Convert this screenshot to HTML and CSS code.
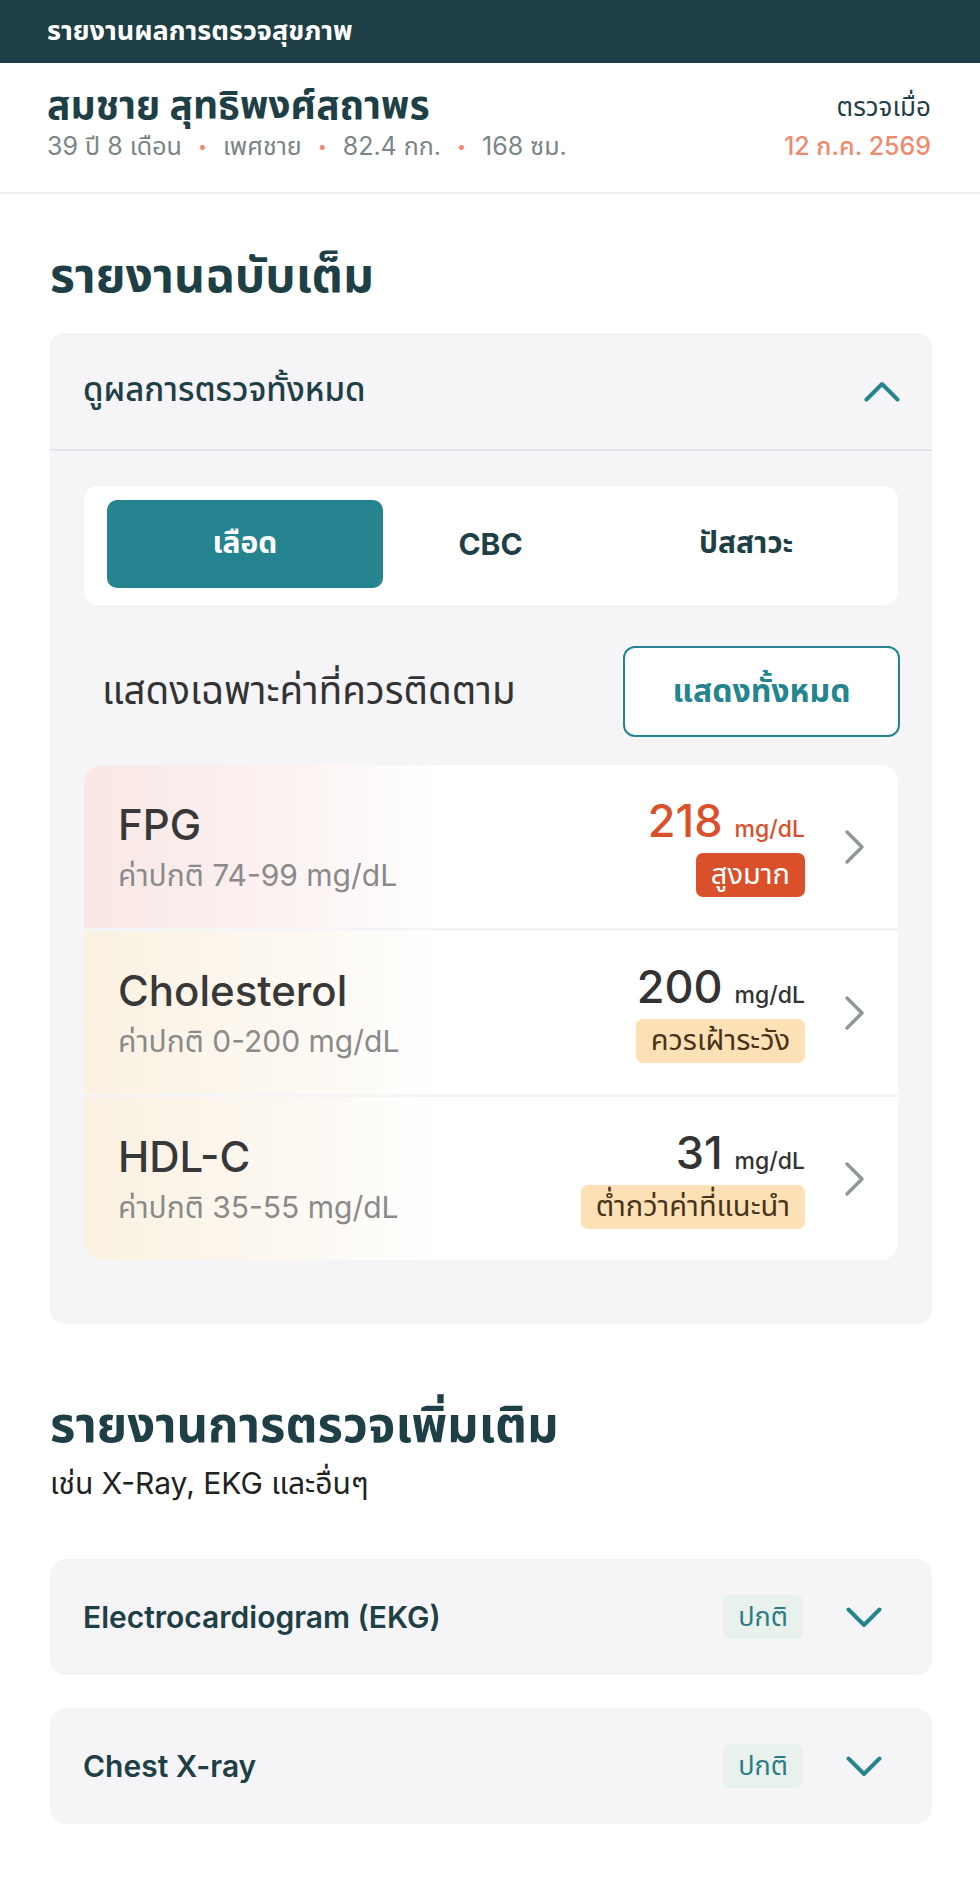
FILE: index.html
```html
<!DOCTYPE html>
<html lang="th">
<head>
    <meta charset="UTF-8">
    <meta name="viewport" content="width=device-width, initial-scale=1.0">
    <title>รายงานผลการตรวจสุขภาพ</title>
    <link rel="stylesheet" href="styles.css">
</head>
<body>
    <header class="topbar">รายงานผลการตรวจสุขภาพ</header>

    <section class="patient">
        <div class="patient-info">
            <h1 class="patient-name">สมชาย สุทธิพงศ์สถาพร</h1>
            <p class="patient-meta">
                39 ปี 8 เดือน <span class="dot">•</span> เพศชาย <span class="dot">•</span> 82.4 กก. <span class="dot">•</span> 168 ซม.
            </p>
        </div>
        <div class="checkup">
            <span class="checkup-label">ตรวจเมื่อ</span>
            <span class="checkup-date">12 ก.ค. 2569</span>
        </div>
    </section>

    <main class="content">
        <h2 class="section-title">รายงานฉบับเต็ม</h2>

        <div class="panel">
            <div class="panel-head">
                <span>ดูผลการตรวจทั้งหมด</span>
                <svg class="chevron-up" width="36" height="21" viewBox="0 0 36 21"><path d="M2.5 18.5 L18 3 L33.5 18.5" /></svg>
            </div>
            <div class="panel-body">
                <div class="tabs">
                    <button class="tab active">เลือด</button>
                    <button class="tab">CBC</button>
                    <button class="tab">ปัสสาวะ</button>
                </div>

                <div class="filter-row">
                    <span>แสดงเฉพาะค่าที่ควรติดตาม</span>
                    <button class="btn-outline">แสดงทั้งหมด</button>
                </div>

                <div class="results">
                    <div class="result-row high">
                        <div class="result-name">
                            <h3>FPG</h3>
                            <p>ค่าปกติ 74-99 mg/dL</p>
                        </div>
                        <div class="result-value">
                            <div class="value"><strong>218</strong><small>mg/dL</small></div>
                            <span class="badge badge-high">สูงมาก</span>
                        </div>
                        <svg class="chevron-right" width="22" height="36" viewBox="0 0 22 36"><path d="M3 3 L18 18 L3 33" /></svg>
                    </div>
                    <div class="result-row warn">
                        <div class="result-name">
                            <h3>Cholesterol</h3>
                            <p>ค่าปกติ 0-200 mg/dL</p>
                        </div>
                        <div class="result-value">
                            <div class="value"><strong>200</strong><small>mg/dL</small></div>
                            <span class="badge badge-warn">ควรเฝ้าระวัง</span>
                        </div>
                        <svg class="chevron-right" width="22" height="36" viewBox="0 0 22 36"><path d="M3 3 L18 18 L3 33" /></svg>
                    </div>
                    <div class="result-row warn">
                        <div class="result-name">
                            <h3>HDL-C</h3>
                            <p>ค่าปกติ 35-55 mg/dL</p>
                        </div>
                        <div class="result-value">
                            <div class="value"><strong>31</strong><small>mg/dL</small></div>
                            <span class="badge badge-warn">ต่ำกว่าค่าที่แนะนำ</span>
                        </div>
                        <svg class="chevron-right" width="22" height="36" viewBox="0 0 22 36"><path d="M3 3 L18 18 L3 33" /></svg>
                    </div>
                </div>
            </div>
        </div>

        <h2 class="section-title extra-title">รายงานการตรวจเพิ่มเติม</h2>
        <p class="section-sub">เช่น X-Ray, EKG และอื่นๆ</p>

        <div class="extra-list">
            <div class="extra-card">
                <span class="extra-name">Electrocardiogram (EKG)</span>
                <span class="badge badge-normal">ปกติ</span>
                <svg class="chevron-down" width="36" height="21" viewBox="0 0 36 21"><path d="M2.5 2.5 L18 18 L33.5 2.5" /></svg>
            </div>
            <div class="extra-card">
                <span class="extra-name">Chest X-ray</span>
                <span class="badge badge-normal">ปกติ</span>
                <svg class="chevron-down" width="36" height="21" viewBox="0 0 36 21"><path d="M2.5 2.5 L18 18 L33.5 2.5" /></svg>
            </div>
        </div>
    </main>
</body>
</html>
```

FILE: styles.css
```css
:root {
    --dark: #1f3f47;
    --teal: #25848f;
    --panel: #f5f5f7;
    --text: #333333;
    --muted: #7b8585;
    --red: #d9502b;
    --salmon: #f08a6d;
    --warn-bg: #fde1b6;
    --warn-text: #4a3318;
    --normal-bg: #e9f1ed;
}

* {
    margin: 0;
    padding: 0;
    box-sizing: border-box;
}

body {
    font-family: "Inter", "Noto Sans Thai", "Noto Sans", sans-serif;
    color: var(--text);
    background-color: #ffffff;
    width: 980px;
}

button {
    font-family: inherit;
    border: none;
    background: none;
}

.topbar {
    height: 63px;
    background-color: var(--dark);
    color: #ffffff;
    font-size: 27px;
    font-weight: 700;
    padding-left: 47px;
    display: flex;
    align-items: center;
}

/* patient summary */
.patient {
    display: flex;
    justify-content: space-between;
    padding: 22px 49px 31px 47px;
    border-bottom: 2px solid #eeeeee;
}

.patient-name {
    font-size: 39px;
    line-height: 40px;
    font-weight: 700;
    color: var(--dark);
}

.patient-meta {
    margin-top: 6px;
    font-size: 25px;
    line-height: 30px;
    color: var(--muted);
}

.dot {
    color: var(--salmon);
    font-size: 16px;
    margin: 0 9px;
    vertical-align: 3px;
}

.checkup {
    display: flex;
    flex-direction: column;
    align-items: flex-end;
}

.checkup-label {
    margin-top: 4px;
    font-size: 26px;
    line-height: 36px;
    color: var(--dark);
}

.checkup-date {
    margin-top: 6px;
    font-size: 25px;
    line-height: 30px;
    font-weight: 500;
    color: var(--salmon);
}

/* main */
.content {
    padding: 0 48px 0 50px;
}

.section-title {
    margin: 53px 0 30px;
    font-size: 48px;
    line-height: 56px;
    font-weight: 700;
    color: var(--dark);
}

.panel {
    background-color: var(--panel);
    border-radius: 14px;
}

.panel-head {
    height: 118px;
    padding: 0 32px 0 33px;
    border-bottom: 2px solid #e3e3ea;
    display: flex;
    align-items: center;
    justify-content: space-between;
    font-size: 33px;
    font-weight: 500;
    color: var(--dark);
}

.chevron-up path,
.chevron-down path {
    fill: none;
    stroke: var(--teal);
    stroke-width: 4;
    stroke-linecap: round;
    stroke-linejoin: round;
}

.panel-body {
    padding: 35px 34px 64px;
}

.tabs {
    display: grid;
    grid-template-columns: repeat(3, 1fr);
    background-color: #ffffff;
    border-radius: 14px;
    padding: 14px 24px 17px 23px;
}

.tab {
    height: 88px;
    border-radius: 10px;
    font-size: 30px;
    font-weight: 700;
    color: var(--dark);
}

.tab.active {
    background-color: var(--teal);
    color: #ffffff;
    margin-right: -20px;
}

.filter-row {
    margin-top: 41px;
    display: flex;
    align-items: center;
    justify-content: space-between;
    padding-left: 18px;
    margin-right: -2px;
    font-size: 38.5px;
    color: var(--text);
}

.btn-outline {
    width: 277px;
    height: 91px;
    border: 2px solid var(--teal);
    border-radius: 12px;
    background-color: #ffffff;
    color: var(--teal);
    font-size: 32px;
    font-weight: 700;
}

.results {
    margin-top: 28px;
    background-color: var(--panel);
    border-radius: 18px;
    overflow: hidden;
    display: flex;
    flex-direction: column;
    gap: 3px;
}

.result-row {
    height: 163px;
    display: flex;
    align-items: center;
    padding: 0 32px 0 34px;
    background-color: #ffffff;
}

.result-row.high {
    background-image: linear-gradient(90deg, #f8e7e5 0%, #fbf1f0 22%, #ffffff 44%);
}

.result-row.warn {
    background-image: linear-gradient(90deg, #faf1e1 0%, #fcf7ef 22%, #ffffff 44%);
}

.result-name {
    flex: 1;
}

.result-name h3 {
    font-size: 42px;
    line-height: 48px;
    font-weight: 500;
    color: #383838;
}

.result-name p {
    margin-top: 8px;
    font-size: 30px;
    line-height: 36px;
    color: #8a8a8a;
}

.result-value {
    display: flex;
    flex-direction: column;
    align-items: flex-end;
    gap: 8px;
}

.value {
    display: flex;
    align-items: baseline;
    gap: 12px;
    color: #333333;
}

.value strong {
    font-size: 45px;
    line-height: 48px;
    font-weight: 500;
}

.value small {
    font-size: 23px;
    font-weight: 500;
}

.high .value {
    color: var(--red);
}

.badge {
    display: inline-flex;
    align-items: center;
    justify-content: center;
    height: 44px;
    padding: 0 15px;
    border-radius: 7px;
    font-size: 29px;
}

.badge-high {
    background-color: var(--red);
    color: #ffffff;
}

.badge-warn {
    background-color: var(--warn-bg);
    color: var(--warn-text);
}

.badge-normal {
    width: 80px;
    padding: 0;
    font-size: 27px;
    background-color: var(--normal-bg);
    color: #2c7c86;
}

.chevron-right {
    margin-left: 39px;
}

.chevron-right path {
    fill: none;
    stroke: #8f9797;
    stroke-width: 3.5;
    stroke-linecap: round;
    stroke-linejoin: round;
}

/* extra reports */
.extra-title {
    margin: 73px 0 0;
    font-size: 49px;
}

.section-sub {
    margin-top: 12px;
    font-size: 30px;
    line-height: 36px;
    color: #222222;
}

.extra-list {
    margin-top: 58px;
    display: flex;
    flex-direction: column;
    gap: 33px;
}

.extra-card {
    height: 116px;
    display: flex;
    align-items: center;
    padding: 0 50px 0 33px;
    background-color: var(--panel);
    border-radius: 16px;
}

.extra-name {
    flex: 1;
    font-size: 30px;
    font-weight: 600;
    color: var(--dark);
}

.chevron-down {
    margin-left: 43px;
}
```
